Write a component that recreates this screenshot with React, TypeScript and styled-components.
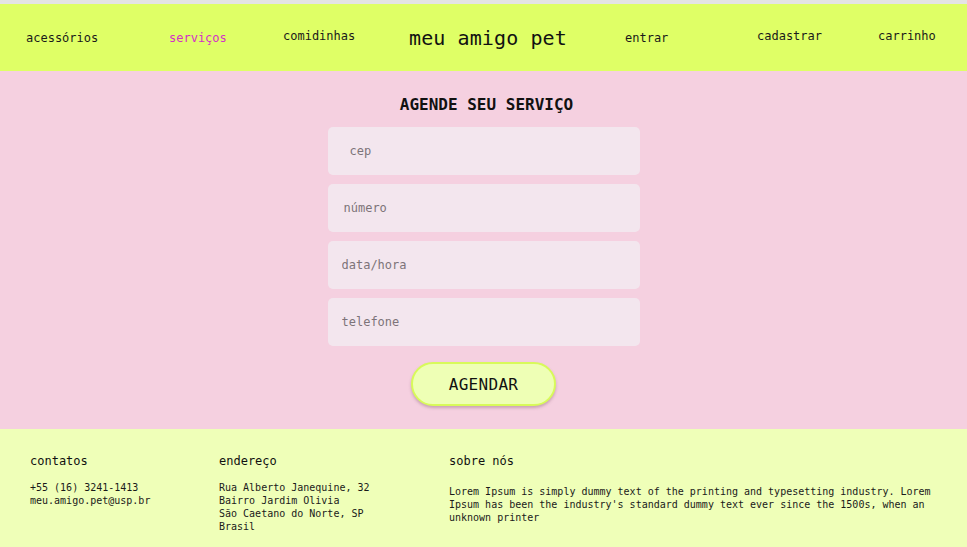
import React from 'react'
import styled, { createGlobalStyle } from 'styled-components'

const mono = `'DejaVu Sans Mono', 'Liberation Mono', monospace`

const GlobalStyle = createGlobalStyle`
  html, body {
    margin: 0;
    padding: 0;
    background: #e4e4e4;
    font-family: ${mono};
    color: #111;
  }
  * {
    box-sizing: border-box;
  }
`

const Page = styled.div`
  padding-top: 4px;
  min-height: 547px;
  display: flex;
  flex-direction: column;
`

const Header = styled.header`
  height: 67px;
  background: #dfff66;
  display: grid;
  grid-template-columns: 143px 114px 126px 216px 132px 121px auto;
  align-items: center;
  padding-left: 26px;
`

const NavLink = styled.a<{ $active?: boolean; $shift?: number }>`
  font-size: 12px;
  color: ${({ $active }) => ($active ? '#d42fc8' : '#1a1a1a')};
  text-decoration: none;
  transform: translateY(${({ $shift }) => $shift ?? 0}px);
  white-space: nowrap;
`

const Logo = styled.h1`
  margin: 0;
  font-size: 20px;
  font-weight: normal;
  letter-spacing: 0.1px;
  color: #111;
  white-space: nowrap;
`

const Main = styled.main`
  background: #f5d0e0;
  display: flex;
  flex-direction: column;
  align-items: center;
  padding: 24px 0 23px;
`

const Title = styled.h2`
  margin: 0 0 13px;
  font-size: 16px;
  font-weight: bold;
  letter-spacing: 0;
  transform: translateX(3px);
`

const Form = styled.form`
  display: flex;
  flex-direction: column;
  align-items: center;
  gap: 9px;
  width: 312px;
`

const Field = styled.input<{ $indent: number }>`
  width: 312px;
  height: 48px;
  border: none;
  border-radius: 5px;
  background: #f3e6ee;
  font-family: ${mono};
  font-size: 12px;
  padding: 0 0 0 ${({ $indent }) => $indent}px;
  outline: none;
  &::placeholder {
    color: #7d7479;
  }
`

const Submit = styled.button`
  margin-top: 7px;
  width: 145px;
  height: 44px;
  border-radius: 22px;
  border: 2px solid #d8fa5a;
  background: #eeffb5;
  box-shadow: 0 2px 3px rgba(120, 80, 100, 0.35);
  font-family: ${mono};
  font-size: 16px;
  letter-spacing: 0.3px;
  color: #111;
  cursor: pointer;
`

const Footer = styled.footer`
  flex: 1;
  background: #efffb8;
  display: grid;
  grid-template-columns: 189px 230px 1fr;
  padding: 25px 30px 18px;
`

const FooterCol = styled.div`
  display: flex;
  flex-direction: column;
`

const FooterTitle = styled.h3<{ $gap?: number }>`
  margin: 0 0 ${({ $gap }) => $gap ?? 13}px;
  font-size: 12px;
  font-weight: normal;
  color: #111;
`

const FooterText = styled.p`
  margin: 0;
  font-size: 10px;
  line-height: 13px;
  color: #1a1a1a;
`

const navItems = [
  { label: 'acessórios', shift: 0 },
  { label: 'serviços', active: true, shift: 0 },
  { label: 'comidinhas', shift: -2 },
]

const navRight = [
  { label: 'entrar', shift: 0 },
  { label: 'cadastrar', shift: -2 },
  { label: 'carrinho', shift: -2 },
]

const fields = [
  { name: 'cep', indent: 22 },
  { name: 'número', indent: 16 },
  { name: 'data/hora', indent: 14 },
  { name: 'telefone', indent: 14 },
]

const App = () => {
  return (
    <>
      <GlobalStyle />
      <Page>
        <Header>
          {navItems.map((item) => (
            <NavLink key={item.label} href="#" $active={item.active} $shift={item.shift}>
              {item.label}
            </NavLink>
          ))}
          <Logo>meu amigo pet</Logo>
          {navRight.map((item) => (
            <NavLink key={item.label} href="#" $shift={item.shift}>
              {item.label}
            </NavLink>
          ))}
        </Header>

        <Main>
          <Title>AGENDE SEU SERVIÇO</Title>
          <Form onSubmit={(e) => e.preventDefault()}>
            {fields.map((f) => (
              <Field key={f.name} placeholder={f.name} $indent={f.indent} />
            ))}
            <Submit type="submit">AGENDAR</Submit>
          </Form>
        </Main>

        <Footer>
          <FooterCol>
            <FooterTitle>contatos</FooterTitle>
            <FooterText>
              +55 (16) 3241-1413
              <br />
              meu.amigo.pet@usp.br
            </FooterText>
          </FooterCol>
          <FooterCol>
            <FooterTitle>endereço</FooterTitle>
            <FooterText>
              Rua Alberto Janequine, 32
              <br />
              Bairro Jardim Olivia
              <br />
              São Caetano do Norte, SP
              <br />
              Brasil
            </FooterText>
          </FooterCol>
          <FooterCol>
            <FooterTitle $gap={17}>sobre nós</FooterTitle>
            <FooterText>
              Lorem Ipsum is simply dummy text of the printing and typesetting industry. Lorem
              Ipsum has been the industry's standard dummy text ever since the 1500s, when an
              unknown printer
            </FooterText>
          </FooterCol>
        </Footer>
      </Page>
    </>
  )
}

export default App
